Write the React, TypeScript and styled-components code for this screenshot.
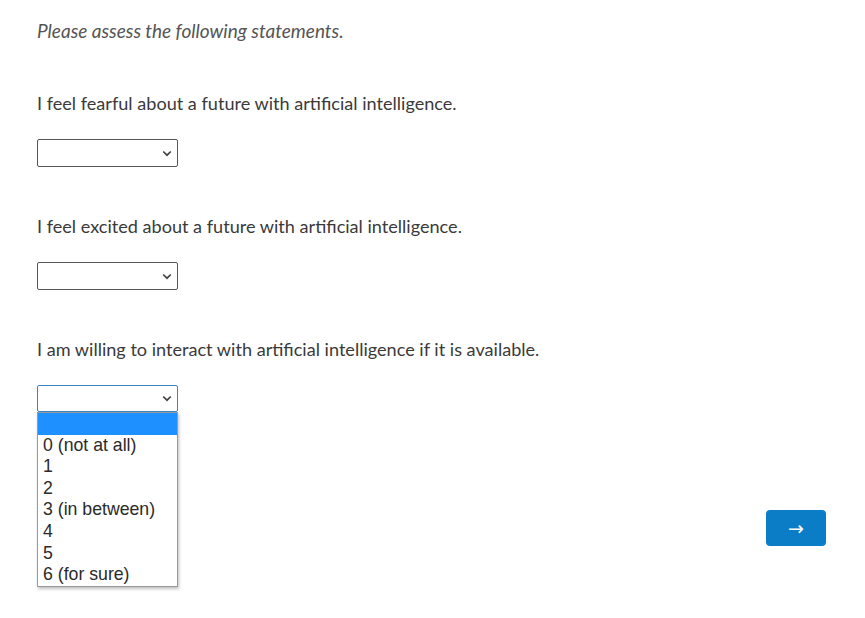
import * as React from 'react';
import styled, { createGlobalStyle, css } from 'styled-components';

const GlobalStyle = createGlobalStyle`
  html, body {
    margin: 0;
    padding: 0;
    background: #ffffff;
  }
  body {
    font-family: Lato, 'Open Sans', sans-serif;
    color: #3a3a3a;
  }
`;

const Page = styled.div`
  width: 865px;
  height: 618px;
  box-sizing: border-box;
  padding: 21px 39px 0 37px;
  display: flex;
  flex-direction: column;
  overflow: hidden;
`;

const Intro = styled.div`
  font-size: 19px;
  line-height: 20px;
  font-style: italic;
  color: #555555;
  margin-bottom: 52px;
`;

const QuestionBlock = styled.div`
  display: flex;
  flex-direction: column;
  align-items: flex-start;
  & + & {
    margin-top: 49px;
  }
`;

const QuestionText = styled.div`
  font-size: 18.1px;
  line-height: 20px;
  color: #3a3a3a;
  margin-bottom: 26px;
`;

const SelectWrap = styled.div`
  position: relative;
  width: 141px;
`;

const SelectBox = styled.div<{ focused?: boolean }>`
  box-sizing: border-box;
  width: 141px;
  height: 28px;
  border: 1px solid #555555;
  border-radius: 2px;
  background: #ffffff;
  display: flex;
  align-items: center;
  justify-content: flex-end;
  padding-right: 5px;
  ${({ focused }) =>
    focused &&
    css`
      border-color: #3c83c2;
      height: 27px;
    `};
`;

const ListBox = styled.ul`
  position: absolute;
  top: 27px;
  left: 0;
  width: 141px;
  box-sizing: border-box;
  margin: 0;
  padding: 0;
  list-style: none;
  background: #ffffff;
  border: 1px solid #9a9a9a;
  box-shadow: 1px 2px 3px rgba(0, 0, 0, 0.25);
  font-family: 'Liberation Sans', Arial, sans-serif;
  font-size: 17.7px;
  color: #2a2a2a;
  z-index: 2;
`;

const Option = styled.li<{ active?: boolean }>`
  height: 21.6px;
  line-height: 21.6px;
  padding: 0 5px;
  white-space: nowrap;
  ${({ active }) =>
    active &&
    css`
      background: #1e90ff;
      color: #ffffff;
    `};
`;

const Footer = styled.div`
  display: flex;
  justify-content: flex-end;
  margin-top: 98px;
`;

const NextButton = styled.button`
  width: 60px;
  height: 36px;
  border: none;
  border-radius: 4px;
  background: #0b7dc6;
  color: #ffffff;
  font-family: 'DejaVu Sans', sans-serif;
  font-size: 19px;
  line-height: 1;
  display: flex;
  align-items: center;
  justify-content: center;
  padding: 0;
  cursor: pointer;
`;

const Chevron = () => (
  <svg width="10" height="7" viewBox="0 0 10 7">
    <path
      d="M1.2 1.5 L5 5.2 L8.8 1.5"
      fill="none"
      stroke="#444444"
      strokeWidth="1.7"
    />
  </svg>
);

const options = [
  '',
  '0 (not at all)',
  '1',
  '2',
  '3 (in between)',
  '4',
  '5',
  '6 (for sure)',
];

const questions = [
  'I feel fearful about a future with artificial intelligence.',
  'I feel excited about a future with artificial intelligence.',
  'I am willing to interact with artificial intelligence if it is available.',
];

export default function App() {
  return (
    <>
      <GlobalStyle />
      <Page>
        <Intro>Please assess the following statements.</Intro>
        {questions.map((q, index) => {
          const isOpen = index === questions.length - 1;
          return (
            <QuestionBlock key={q}>
              <QuestionText>{q}</QuestionText>
              <SelectWrap>
                <SelectBox focused={isOpen}>
                  <Chevron />
                </SelectBox>
                {isOpen && (
                  <ListBox>
                    {options.map((o, i) => (
                      <Option key={i} active={i === 0}>
                        {o}
                      </Option>
                    ))}
                  </ListBox>
                )}
              </SelectWrap>
            </QuestionBlock>
          );
        })}
        <Footer>
          <NextButton>→</NextButton>
        </Footer>
      </Page>
    </>
  );
}
